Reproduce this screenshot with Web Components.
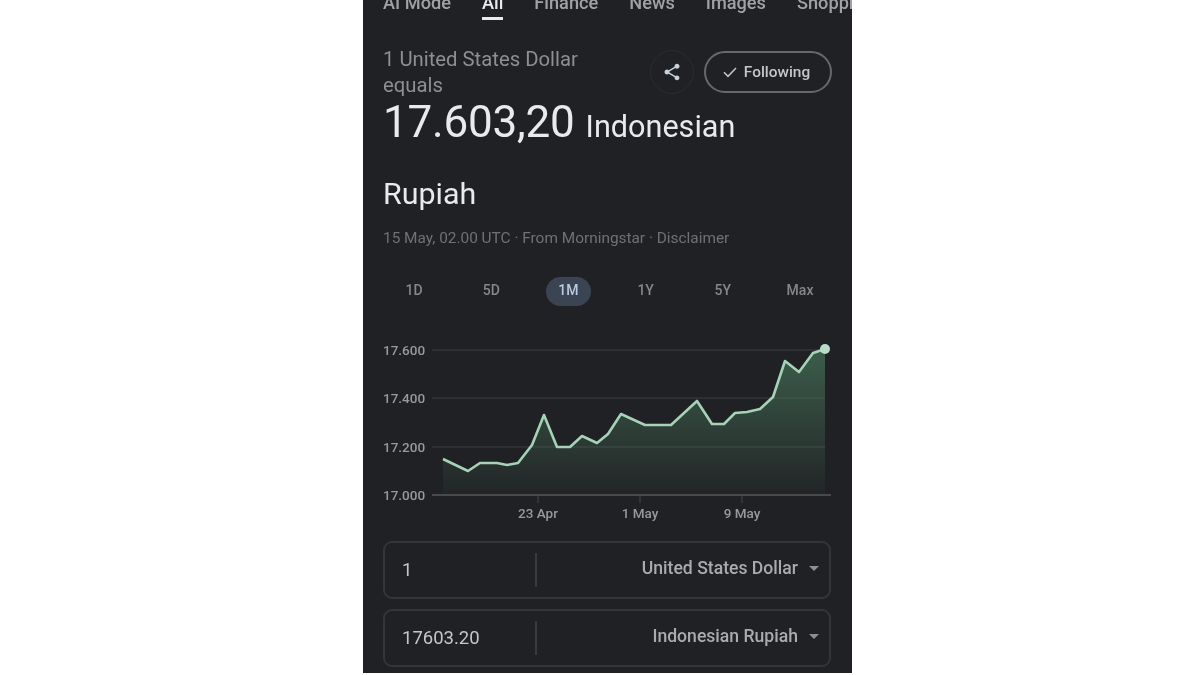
<!DOCTYPE html>
<html>
<head>
<meta charset="utf-8">
<style>
  html, body { margin: 0; background: #fff; }
  body { height: 675px; overflow: hidden; font-family: Roboto, "Liberation Sans", sans-serif; }
</style>
</head>
<body>
<finance-screen>
  <tab-strip></tab-strip>
  <rate-header></rate-header>
  <range-tabs></range-tabs>
  <rate-chart></rate-chart>
  <convert-row value="1" currency="United States Dollar"></convert-row>
  <convert-row value="17603.20" currency="Indonesian Rupiah"></convert-row>
</finance-screen>

<script>
class FinanceScreen extends HTMLElement {
  constructor() {
    super();
    this.attachShadow({ mode: 'open' });
    this.shadowRoot.innerHTML = `
      <style>
        :host { display: block; width: 489px; height: 673px; margin-left: 363px; background: #202124;
          overflow: hidden; filter: blur(0.7px); }
      </style>
      <slot></slot>`;
  }
}

class TabStrip extends HTMLElement {
  constructor() {
    super();
    this.attachShadow({ mode: 'open' });
    const tabs = ['AI Mode', 'All', 'Finance', 'News', 'Images', 'Shopping'];
    this.shadowRoot.innerHTML = `
      <style>
        :host { display: block; height: 20px; padding-left: 20px; overflow: hidden; }
        .row { display: flex; gap: 31px; margin-top: -7px; white-space: nowrap;
          font: 500 18.2px Roboto, sans-serif; color: #a0a2a5; }
        span { display: block; height: 27px; line-height: 20px; box-sizing: border-box; }
        .on { color: #e8eaed; border-bottom: 3px solid #e8eaed; }
      </style>
      <div class="row">${tabs.map(t => `<span class="${t === 'All' ? 'on' : ''}">${t}</span>`).join('')}</div>`;
  }
}

class RateHeader extends HTMLElement {
  constructor() {
    super();
    this.attachShadow({ mode: 'open' });
    this.shadowRoot.innerHTML = `
      <style>
        :host { display: block; padding: 26px 20px 0; color: #e8eaed; font-family: Roboto, sans-serif; }
        .top { display: flex; justify-content: space-between; align-items: flex-start; }
        .from { width: 210px; font-size: 20.3px; line-height: 26px; color: #8d8f93; }
        .actions { display: flex; align-items: center; gap: 10px; margin-top: 4px; }
        .share { width: 44px; height: 44px; border-radius: 50%; border: 1px solid #292c32; box-sizing: border-box;
          display: flex; align-items: center; justify-content: center; }
        .follow { width: 128px; height: 42px; box-sizing: border-box; border: 2px solid #66686c; border-radius: 21px;
          display: flex; align-items: center; justify-content: center; gap: 6px; padding-right: 4px;
          font-size: 15.4px; font-weight: 500; color: #c4c6c9; }
        .amount { display: flex; align-items: baseline; gap: 11px; margin-top: -1px; line-height: 50px; }
        .num { font-size: 44px; letter-spacing: -.2px; }
        .cur { font-size: 30.6px; }
        .cur2 { font-size: 30.4px; line-height: 44px; margin-top: 20px; }
        .meta { margin-top: 11px; font-size: 15.4px; line-height: 22px; color: #6f7175; white-space: nowrap; }
      </style>
      <div class="top">
        <div class="from">1 United States Dollar equals</div>
        <div class="actions">
          <div class="share">
            <svg width="20" height="20" viewBox="0 0 24 24" fill="#c9d2dc">
              <path d="M18 16.08c-.76 0-1.44.3-1.96.77L8.91 12.7c.05-.23.09-.46.09-.7s-.04-.47-.09-.7l7.05-4.11c.54.5 1.25.81 2.04.81 1.66 0 3-1.34 3-3s-1.34-3-3-3-3 1.34-3 3c0 .24.04.47.09.7L8.04 9.81C7.5 9.31 6.79 9 6 9c-1.66 0-3 1.34-3 3s1.34 3 3 3c.79 0 1.5-.31 2.04-.81l7.12 4.16c-.05.21-.08.43-.08.65 0 1.61 1.31 2.92 2.92 2.92s2.92-1.31 2.92-2.92-1.31-2.92-2.92-2.92z"/>
            </svg>
          </div>
          <div class="follow">
            <svg width="16" height="16" viewBox="0 0 24 24" fill="none" stroke="#c4c6c9" stroke-width="2.2">
              <path d="M3 12.5l6 6L21 6"/>
            </svg>
            <span>Following</span>
          </div>
        </div>
      </div>
      <div class="amount"><span class="num">17.603,20</span><span class="cur">Indonesian</span></div>
      <div class="cur2">Rupiah</div>
      <div class="meta">15 May, 02.00 UTC · From Morningstar · Disclaimer</div>`;
  }
}

class RangeTabs extends HTMLElement {
  constructor() {
    super();
    this.attachShadow({ mode: 'open' });
    const ranges = ['1D', '5D', '1M', '1Y', '5Y', 'Max'];
    this.shadowRoot.innerHTML = `
      <style>
        :host { display: grid; grid-template-columns: repeat(6, 77.2px); margin: 28px 0 0 12.5px;
          font: 500 14px Roboto, sans-serif; color: #85878b; }
        div { height: 29px; display: flex; align-items: center; justify-content: center; }
        span { display: block; line-height: 27px; padding: 0 12px 2px; border-radius: 15px; }
        .on { background: #3a4452; color: #b9cbe0; }
      </style>
      ${ranges.map(r => `<div><span class="${r === '1M' ? 'on' : ''}">${r}</span></div>`).join('')}`;
  }
}

class RateChart extends HTMLElement {
  constructor() {
    super();
    this.attachShadow({ mode: 'open' });
    // chart points, x from the left of the screen, y from the top of the svg
    const pts = [[80,124],[105,136],[117,128],[134,128],[144,130],[155,128],[169,110],[181,80],[194,112],
      [207,112],[219,101],[234,108],[245,99],[258,79],[282,90],[308,90],[334,66],[349,89],[361,89],[372,78],
      [384,77],[397,74],[410,62],[422,26],[436,37],[450,18],[462,14]];
    const line = pts.map(p => p.join(',')).join(' ');
    const grid = [[15, '17.600'], [63, '17.400'], [112, '17.200'], [160, '17.000']];
    const ticks = [[175, '23 Apr'], [277, '1 May'], [379, '9 May']];
    this.shadowRoot.innerHTML = `
      <style>
        :host { display: block; margin-top: 29px; }
        svg { display: block; }
        text { font: 500 13.5px Roboto, sans-serif; fill: #98999c; }
      </style>
      <svg width="489" height="190" viewBox="0 0 489 190">
        <defs>
          <linearGradient id="fill" x1="0" y1="0" x2="0" y2="1">
            <stop offset="0" stop-color="#4d8263" stop-opacity=".62"/>
            <stop offset="1" stop-color="#4d8263" stop-opacity=".04"/>
          </linearGradient>
        </defs>
        ${grid.map((g, i) => `<text x="20" y="${g[0] + 5}">${g[1]}</text>
          <line x1="69" x2="${i === 3 ? 468 : 462}" y1="${g[0]}" y2="${g[0]}" stroke="${i === 3 ? '#48494c' : '#343539'}" stroke-width="${i === 3 ? 2 : 1.5}"/>`).join('')}
        <polygon points="80,160 ${line} 462,160" fill="url(#fill)"/>
        <polyline points="${line}" fill="none" stroke="#a6d2b7" stroke-width="2.6" stroke-linejoin="round"/>
        <circle cx="462" cy="14" r="5" fill="#b9dcc6"/>
        ${ticks.map(t => `<line x1="${t[0]}" x2="${t[0]}" y1="161" y2="168" stroke="#48494c"/>
          <text x="${t[0]}" y="183" text-anchor="middle">${t[1]}</text>`).join('')}
      </svg>`;
  }
}

class ConvertRow extends HTMLElement {
  constructor() {
    super();
    this.attachShadow({ mode: 'open' });
    this.shadowRoot.innerHTML = `
      <style>
        :host { display: flex; align-items: center; height: 58px; box-sizing: border-box; margin: 10px 21px 0 20px;
          border: 2px solid #343538; border-radius: 9px; font-family: Roboto, sans-serif; }
        :host(:first-of-type) { margin-top: 16px; }
        .value { width: 150px; padding-left: 17px; box-sizing: border-box; font-size: 18.5px; color: #c4c6c9; }
        .rule { width: 1.5px; height: 34px; background: #3a3b3e; }
        .cur { flex: 1; display: flex; justify-content: flex-end; align-items: center; padding: 0 10px 4px 0;
          font-size: 17.6px; font-weight: 500; color: #a9abae; }
        .cur i { width: 0; height: 0; margin-left: 11px; border: 5.5px solid transparent; border-top: 5px solid #8d8f93; border-bottom: 0; }
      </style>
      <div class="value"></div>
      <div class="rule"></div>
      <div class="cur"><span></span><i></i></div>`;
    this.shadowRoot.querySelector('.value').textContent = this.getAttribute('value');
    this.shadowRoot.querySelector('.cur span').textContent = this.getAttribute('currency');
  }
}

customElements.define('finance-screen', FinanceScreen);
customElements.define('tab-strip', TabStrip);
customElements.define('rate-header', RateHeader);
customElements.define('range-tabs', RangeTabs);
customElements.define('rate-chart', RateChart);
customElements.define('convert-row', ConvertRow);
</script>
</body>
</html>
